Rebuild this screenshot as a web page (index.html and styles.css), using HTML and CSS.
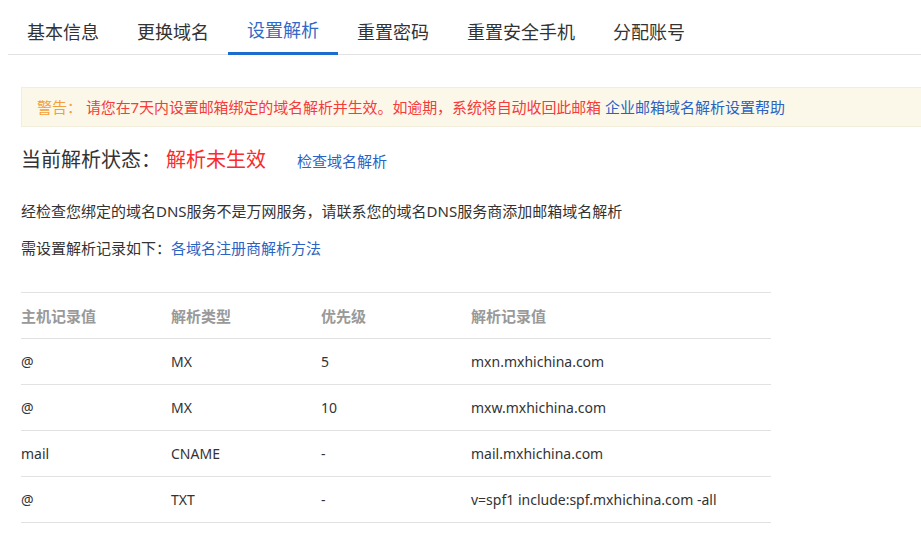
FILE: index.html
```html
<!DOCTYPE html>
<html lang="zh">
<head>
  <meta charset="UTF-8" />
  <title>设置解析</title>
  <link rel="stylesheet" href="styles.css">
</head>
<body>
  <ul class="tabs">
    <li>基本信息</li>
    <li>更换域名</li>
    <li class="active">设置解析</li>
    <li>重置密码</li>
    <li>重置安全手机</li>
    <li>分配账号</li>
  </ul>

  <div class="content">
    <div class="warn">
      <span class="warn-label">警告：</span>
      <span class="warn-text">请您在7天内设置邮箱绑定的域名解析并生效。如逾期，系统将自动收回此邮箱</span>
      <a href="#">企业邮箱域名解析设置帮助</a>
    </div>

    <div class="status">
      <span class="status-label">当前解析状态：</span>
      <span class="status-value">解析未生效</span>
      <a href="#">检查域名解析</a>
    </div>

    <p class="note">经检查您绑定的域名DNS服务不是万网服务，请联系您的域名DNS服务商添加邮箱域名解析</p>
    <p class="note">需设置解析记录如下：<a href="#">各域名注册商解析方法</a></p>

    <table class="records">
      <thead>
        <tr><th>主机记录值</th><th>解析类型</th><th>优先级</th><th>解析记录值</th></tr>
      </thead>
      <tbody>
        <tr><td>@</td><td>MX</td><td>5</td><td>mxn.mxhichina.com</td></tr>
        <tr><td>@</td><td>MX</td><td>10</td><td>mxw.mxhichina.com</td></tr>
        <tr><td>mail</td><td>CNAME</td><td>-</td><td>mail.mxhichina.com</td></tr>
        <tr><td>@</td><td>TXT</td><td>-</td><td>v=spf1 include:spf.mxhichina.com -all</td></tr>
      </tbody>
    </table>
  </div>
</body>
</html>
```

FILE: styles.css
```css
body { margin: 8px 0 0 8px; font-family: "Noto Sans", "Noto Sans CJK SC", sans-serif; color: #333; background: #fff; }
a { color: #2a63c4; text-decoration: none; }

.tabs { list-style: none; margin: 0; padding: 0; display: flex; border-bottom: 1px solid #e3e3e3; }
.tabs li { padding: 0 19px; height: 44px; line-height: 48px; font-size: 18px; border-bottom: 3px solid transparent; margin-bottom: -1px; white-space: nowrap; }
.tabs li.active { color: #3268c8; border-bottom-color: #1a6ccf; line-height: 44px; }

.content { padding: 0 0 0 13px; }

.warn { margin-top: 32px; height: 38px; line-height: 38px; padding-left: 15px; background: #fcf8e9; border: 1px solid #f3eedc; border-right: none; font-size: 15px; white-space: nowrap; overflow: hidden; }
.warn-label { color: #f3a03b; }
.warn-text { color: #f53b3b; letter-spacing: -0.1px; }

.status { margin-top: 17px; display: flex; align-items: baseline; white-space: nowrap; }
.status-label { font-size: 20px; color: #333; }
.status-value { font-size: 20px; color: #f82c2c; margin-left: 5px; }
.status a { font-size: 15px; margin-left: 31px; }

.note { margin: 0; font-size: 15px; line-height: 22px; }
.status + .note { margin-top: 27px; }
.note + .note { margin-top: 15px; }

.records { margin-top: 33px; width: 750px; border-collapse: collapse; font-size: 14px; }
.records th, .records td { height: 45px; padding: 0; text-align: left; border-top: 1px solid #e2e2e2; border-bottom: 1px solid #e2e2e2; }
.records th { color: #999; font-weight: 600; font-size: 15px; }
.records th:nth-child(-n+3), .records td:nth-child(-n+3) { width: 150px; }
```
